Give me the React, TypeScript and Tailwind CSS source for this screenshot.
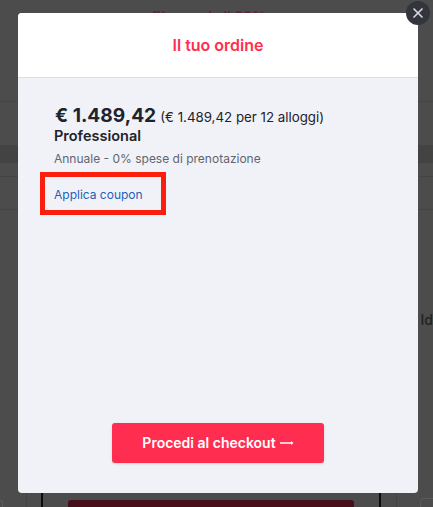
import { X } from "lucide-react";

export default function App() {
  return (
    <div className="relative h-[507px] w-[433px] overflow-hidden bg-[#4c4c4c] font-['Inter',sans-serif]">
      {/* dimmed page behind the modal */}
      <div className="flex h-full flex-col">
        <p className="pt-[7px] pr-[14px] text-center text-[14px] leading-[20px] font-semibold text-[#6a1f35]">Risparmia il 20%</p>
        <div className="mt-[74px] h-px bg-[#444444]" />
        <div className="mt-[43px] h-[18px] bg-[#434343]" />
        <div className="mt-[13px] h-px bg-[#444444]" />
        <div className="mt-[32px] h-px bg-[#444444]" />
        <div className="flex flex-1 justify-end">
          <span className="mt-[100px] text-[14px] leading-[20px] font-medium text-[#222222]">Id</span>
        </div>
        <div className="flex h-[16px] shrink-0">
          <div className="w-[27px] border-r border-[#444444]">
            <div className="mt-[9px] h-[7px] w-[3px] rounded-tr-[3px] border-t border-r border-[#5a5a5a]" />
          </div>
          <div className="ml-[14px] w-[340px] border-x-2 border-[#0c0c0c] px-[25px] pt-[9px]">
            <div className="h-full rounded-t-[3px] bg-[#470f1b]" />
          </div>
          <div className="ml-[15px] w-[24px] border-l border-[#444444]" />
          <div className="mt-[7px] flex-1 rounded-tl-[4px] border-t border-l border-[#5a5a5a]" />
        </div>
      </div>

      {/* modal */}
      <div className="absolute top-[13px] left-[18px] flex h-[480px] w-[400px] flex-col overflow-hidden rounded-[4px] bg-[#f1f2f8]">
        <div className="flex h-[65px] shrink-0 items-center justify-center border-b border-[#dcdde3] bg-white">
          <h2 className="text-[16px] leading-[24px] font-semibold text-[#ff2e50]">Il tuo ordine</h2>
        </div>
        <div className="flex flex-1 flex-col pt-[25px] pr-[36px] pb-[30px] pl-[36px]">
          <div className="flex items-baseline gap-[4px] pl-px">
            <span className="text-[19.2px] leading-[24px] font-bold text-[#20232c]">€ 1.489,42</span>
            <span className="text-[13.3px] text-[#20232c]">(€ 1.489,42 per 12 alloggi)</span>
          </div>
          <p className="-mt-[2px] text-[14.5px] leading-[20px] font-semibold text-[#20232c]">Professional</p>
          <p className="mt-[3px] text-[12px] leading-[20px] text-[#62656f]">Annuale - 0% spese di prenotazione</p>
          <a className="mt-[16px] text-[12px] leading-[20px] text-[#1f5fb4]">Applica coupon</a>
          <button className="mx-auto mt-auto flex h-[40px] w-[212px] items-center justify-center gap-[4px] rounded-[3px] bg-[#ff2e50] pb-px text-[14px] font-semibold text-white shadow-sm">
            Procedi al checkout
            <svg width="14" height="6" viewBox="0 0 14 6" fill="none">
              <path d="M0 3h11" stroke="white" strokeWidth="1.3" />
              <path d="M11 1l2.5 2L11 5z" fill="white" />
            </svg>
          </button>
        </div>
      </div>

      {/* annotation over the coupon link */}
      <div className="absolute top-[172px] left-[40px] h-[43px] w-[126px] border-[5px] border-[#fb1e0c]" />

      <button className="absolute top-[1px] left-[406px] flex h-[24px] w-[24px] items-center justify-center rounded-full bg-[#33353d] text-[#d8d9dd]">
        <X size={16} strokeWidth={2.5} />
      </button>
    </div>
  );
}
